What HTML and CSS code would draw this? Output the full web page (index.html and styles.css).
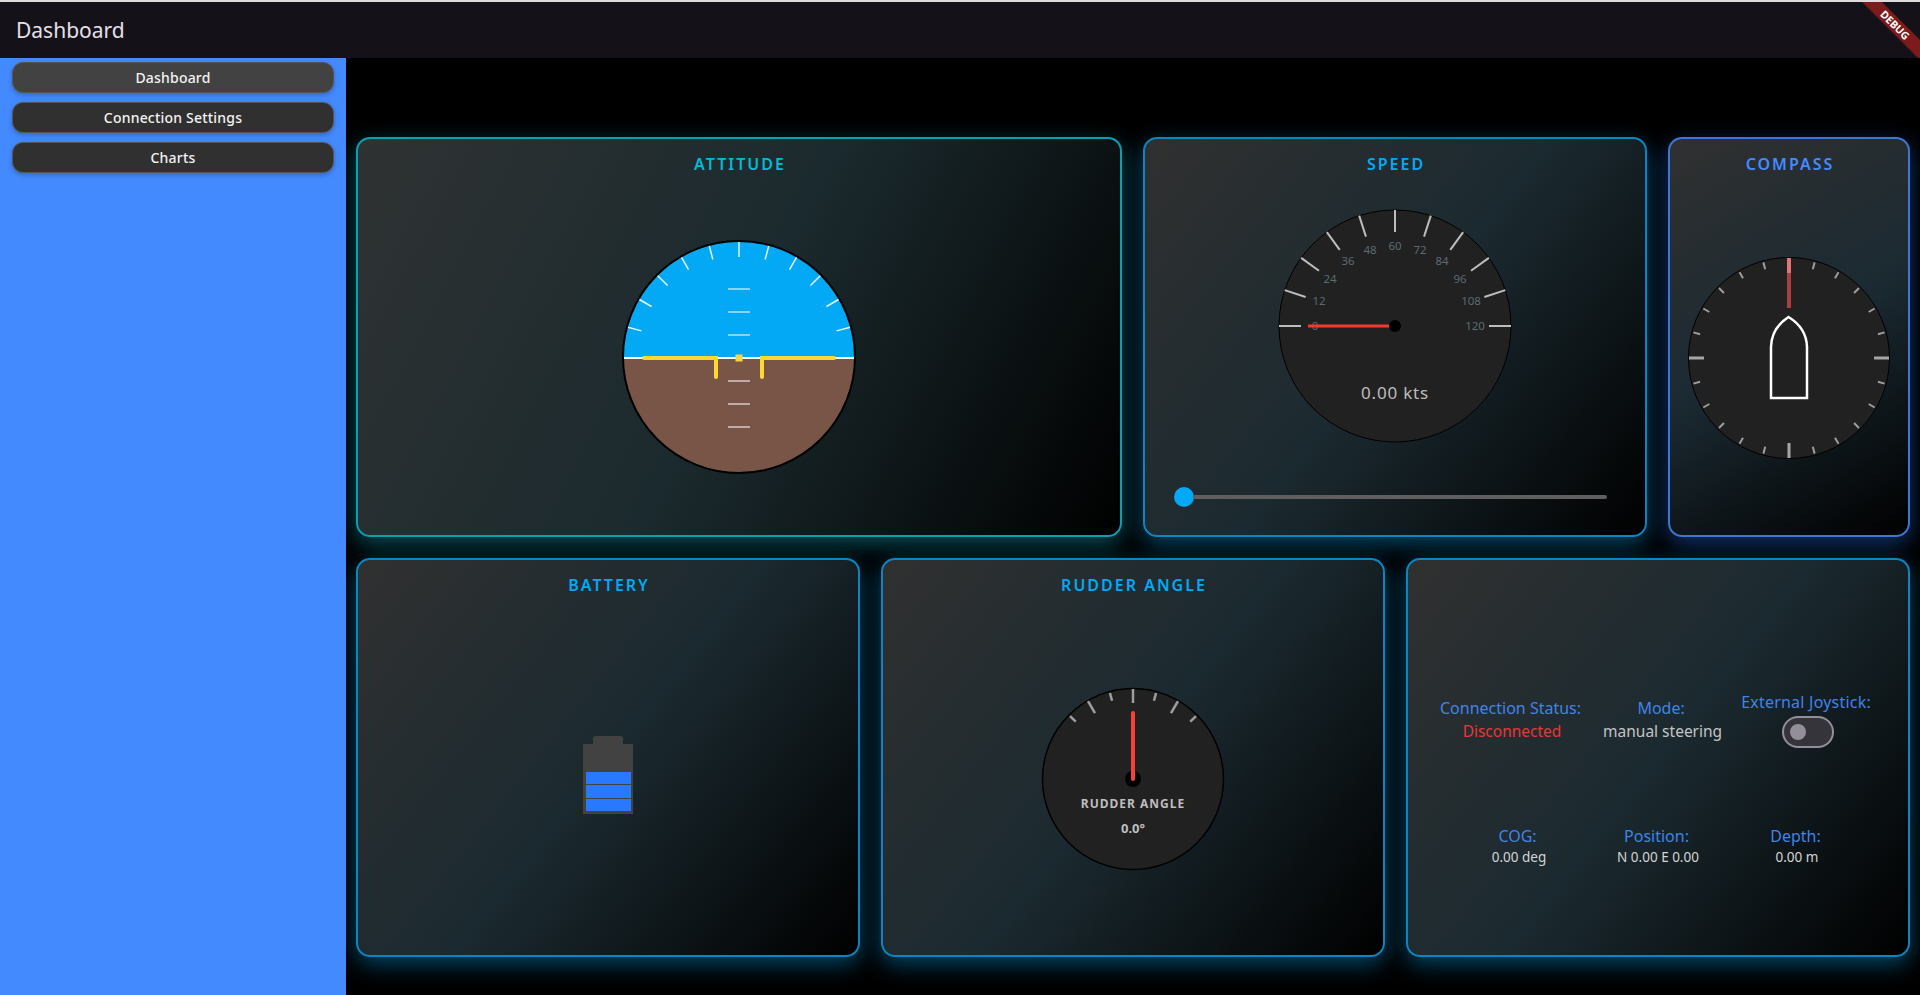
FILE: index.html
```html
<!DOCTYPE html>
<html lang="en">
<head>
<meta charset="utf-8">
<title>Dashboard</title>
<link rel="stylesheet" href="styles.css">
</head>
<body>
<div class="app">
  <header class="appbar">
    <h1 class="appbar-title">Dashboard</h1>
    <div class="debug"><div class="debug-band">DEBUG</div></div>
  </header>
  <div class="body-row">
    <nav class="sidebar">
      <button class="nav-btn active">Dashboard</button>
      <button class="nav-btn">Connection Settings</button>
      <button class="nav-btn">Charts</button>
    </nav>
    <main class="main">
      <div class="row row-top">
        <section class="card card-cyan card-wide">
          <h2 class="card-title title-cyan">ATTITUDE</h2>
          <svg class="gauge attitude" viewBox="-118 -118 236 236" width="236" height="236">
            <defs><clipPath id="ac"><circle r="116"/></clipPath></defs>
            <g clip-path="url(#ac)">
              <rect x="-118" y="-118" width="236" height="119" fill="#03a9f4"/>
              <rect x="-118" y="1" width="236" height="118" fill="#795548"/>
              <line x1="-118" x2="118" y1="1" y2="1" class="att-horizon"/>
            </g>
            <circle r="116" class="att-rim"/>
            <g class="att-ticks">
              <line y1="-115" y2="-100"/>
              <line y1="-115" y2="-101" transform="rotate(15)"/>
              <line y1="-115" y2="-101" transform="rotate(-15)"/>
              <line y1="-115" y2="-101" transform="rotate(30)"/>
              <line y1="-115" y2="-101" transform="rotate(-30)"/>
              <line y1="-115" y2="-101" transform="rotate(45)"/>
              <line y1="-115" y2="-101" transform="rotate(-45)"/>
              <line y1="-115" y2="-101" transform="rotate(60)"/>
              <line y1="-115" y2="-101" transform="rotate(-60)"/>
              <line y1="-115" y2="-101" transform="rotate(75)"/>
              <line y1="-115" y2="-101" transform="rotate(-75)"/>
            </g>
            <g class="att-pitch">
              <line x1="-11" x2="11" y1="-68" y2="-68"/>
              <line x1="-11" x2="11" y1="-45" y2="-45"/>
              <line x1="-11" x2="11" y1="-22" y2="-22"/>
              <line x1="-11" x2="11" y1="24" y2="24"/>
              <line x1="-11" x2="11" y1="47" y2="47"/>
              <line x1="-11" x2="11" y1="70" y2="70"/>
            </g>
            <g class="att-wings">
              <path d="M-95 1H-23V20"/>
              <path d="M95 1H23V20"/>
            </g>
            <rect x="-3.5" y="-2.5" width="7" height="7" fill="#fdd835"/>
          </svg>
        </section>
        <section class="card card-blue">
          <h2 class="card-title title-blue">SPEED</h2>
          <svg class="gauge speed" viewBox="-120 -120 240 240" width="240" height="240">
            <circle r="116" class="dial"/>
            <g class="speed-ticks">
              <line y1="-116" y2="-94" transform="rotate(-90)"/>
              <line y1="-116" y2="-94" transform="rotate(-72)"/>
              <line y1="-116" y2="-94" transform="rotate(-54)"/>
              <line y1="-116" y2="-94" transform="rotate(-36)"/>
              <line y1="-116" y2="-94" transform="rotate(-18)"/>
              <line y1="-116" y2="-94"/>
              <line y1="-116" y2="-94" transform="rotate(18)"/>
              <line y1="-116" y2="-94" transform="rotate(36)"/>
              <line y1="-116" y2="-94" transform="rotate(54)"/>
              <line y1="-116" y2="-94" transform="rotate(72)"/>
              <line y1="-116" y2="-94" transform="rotate(90)"/>
            </g>
            <g class="speed-labels">
              <text x="-80" y="4">0</text>
              <text x="-76" y="-21">12</text>
              <text x="-65" y="-43">24</text>
              <text x="-47" y="-61">36</text>
              <text x="-25" y="-72">48</text>
              <text x="0" y="-76">60</text>
              <text x="25" y="-72">72</text>
              <text x="47" y="-61">84</text>
              <text x="65" y="-43">96</text>
              <text x="76" y="-21">108</text>
              <text x="80" y="4">120</text>
            </g>
            <line x1="-87" x2="0" y1="0" y2="0" class="speed-needle"/>
            <circle r="6" fill="#000"/>
            <text y="73" class="speed-value">0.00 kts</text>
          </svg>
          <div class="slider"><span class="slider-thumb"></span><span class="slider-track"></span></div>
        </section>
        <section class="card card-indigo card-narrow">
          <h2 class="card-title title-indigo">COMPASS</h2>
          <svg class="gauge compass" viewBox="-102 -102 204 204" width="204" height="204">
            <circle r="100.5" class="dial"/>
            <g class="compass-major">
              <line y1="-100" y2="-85" transform="rotate(90)"/>
              <line y1="-100" y2="-85" transform="rotate(180)"/>
              <line y1="-100" y2="-85" transform="rotate(270)"/>
            </g>
            <g class="compass-minor">
              <line y1="-99" y2="-92" transform="rotate(15)"/>
              <line y1="-99" y2="-92" transform="rotate(30)"/>
              <line y1="-99" y2="-92" transform="rotate(45)"/>
              <line y1="-99" y2="-92" transform="rotate(60)"/>
              <line y1="-99" y2="-92" transform="rotate(75)"/>
              <line y1="-99" y2="-92" transform="rotate(105)"/>
              <line y1="-99" y2="-92" transform="rotate(120)"/>
              <line y1="-99" y2="-92" transform="rotate(135)"/>
              <line y1="-99" y2="-92" transform="rotate(150)"/>
              <line y1="-99" y2="-92" transform="rotate(165)"/>
              <line y1="-99" y2="-92" transform="rotate(195)"/>
              <line y1="-99" y2="-92" transform="rotate(210)"/>
              <line y1="-99" y2="-92" transform="rotate(225)"/>
              <line y1="-99" y2="-92" transform="rotate(240)"/>
              <line y1="-99" y2="-92" transform="rotate(255)"/>
              <line y1="-99" y2="-92" transform="rotate(285)"/>
              <line y1="-99" y2="-92" transform="rotate(300)"/>
              <line y1="-99" y2="-92" transform="rotate(315)"/>
              <line y1="-99" y2="-92" transform="rotate(330)"/>
              <line y1="-99" y2="-92" transform="rotate(345)"/>
            </g>
            <rect x="-2" y="-100" width="4" height="15" fill="#e57373"/>
            <rect x="-2" y="-85" width="4" height="35" fill="#ab3f3f"/>
            <path class="boat" d="M-0.5 -41Q-17.5 -30 -18 -11V40H18V-11Q17.5 -30 -0.5 -41Z"/>
          </svg>
        </section>
      </div>
      <div class="row row-bottom">
        <section class="card card-blue">
          <h2 class="card-title title-blue">BATTERY</h2>
          <div class="battery">
            <div class="battery-cap"></div>
            <div class="battery-body">
              <div class="battery-cell"></div>
              <div class="battery-cell"></div>
              <div class="battery-cell"></div>
            </div>
          </div>
        </section>
        <section class="card card-blue">
          <h2 class="card-title title-blue">RUDDER ANGLE</h2>
          <svg class="gauge rudder" viewBox="-92 -92 184 184" width="184" height="184">
            <circle r="90.5" class="dial dial-thick"/>
            <g class="rudder-ticks">
              <line y1="-90" y2="-76"/>
              <line y1="-90" y2="-76" transform="rotate(30)"/>
              <line y1="-90" y2="-76" transform="rotate(-30)"/>
              <line y1="-89" y2="-81" transform="rotate(15)"/>
              <line y1="-89" y2="-81" transform="rotate(-15)"/>
              <line y1="-89" y2="-81" transform="rotate(45)"/>
              <line y1="-89" y2="-81" transform="rotate(-45)"/>
            </g>
            <circle r="8" fill="#000"/>
            <line y1="0" y2="-66" class="rudder-needle"/>
            <text y="29" class="rudder-label">RUDDER ANGLE</text>
            <text y="54" class="rudder-value">0.0°</text>
          </svg>
        </section>
        <section class="card card-blue info-card">
          <div class="info-row-top">
            <div class="info-item">
              <div class="info-label">Connection Status:</div>
              <div class="info-value info-red">Disconnected</div>
            </div>
            <div class="info-item">
              <div class="info-label">Mode:</div>
              <div class="info-value">manual steering</div>
            </div>
            <div class="info-item">
              <div class="info-label info-label-wide">External Joystick:</div>
              <div class="switch"><span class="switch-thumb"></span></div>
            </div>
          </div>
          <div class="info-row-bottom">
            <div class="info-item">
              <div class="info-label">COG:</div>
              <div class="info-small">0.00 deg</div>
            </div>
            <div class="info-item">
              <div class="info-label">Position:</div>
              <div class="info-small">N 0.00 E 0.00</div>
            </div>
            <div class="info-item">
              <div class="info-label">Depth:</div>
              <div class="info-small">0.00 m</div>
            </div>
          </div>
        </section>
      </div>
    </main>
  </div>
</div>
</body>
</html>
```
FILE: styles.css
```css
* { box-sizing: border-box; }
html, body { margin: 0; padding: 0; height: 100%; background: #000; }
body { font-family: "Noto Sans", "Open Sans", sans-serif; overflow: hidden; }
.app { height: 995px; display: flex; flex-direction: column; }

.appbar {
  position: relative;
  height: 58px;
  flex: none;
  background: #141218;
  border-top: 2px solid #dcdcdc;
  display: flex;
  align-items: center;
  padding-left: 16px;
}
.appbar-title { margin: 0; font-size: 21px; font-weight: 400; color: #e6e0e9; line-height: 1; }
.debug { position: absolute; top: 0; right: 0; width: 60px; height: 56px; overflow: hidden; }
.debug-band {
  position: absolute;
  left: -15px;
  top: 16px;
  width: 100px;
  height: 14px;
  background: #7d1a1c;
  color: #fff;
  font-size: 10.5px;
  font-weight: 700;
  line-height: 14px;
  text-align: center;
  transform: rotate(45deg);
}

.body-row { flex: 1; display: flex; min-height: 0; }
.sidebar {
  width: 346px;
  flex: none;
  background: #448aff;
  padding: 4px 12px;
  display: flex;
  flex-direction: column;
  gap: 9px;
  position: relative;
  z-index: 2;
}
.nav-btn {
  height: 31px;
  width: 322px;
  border-radius: 11px;
  border: 1px solid #555;
  background: #303030;
  color: #f2f2f2;
  font: 500 14px "Noto Sans", sans-serif;
  letter-spacing: .2px;
  box-shadow: 0 2px 5px rgba(0, 0, 0, .25);
  padding: 0;
}
.nav-btn.active { background: #424242; }

.main {
  flex: 1;
  min-width: 0;
  padding: 79px 10px 38px;
  display: grid;
  grid-template-rows: 1fr 1fr;
  gap: 21px;
  overflow: hidden;
}
.row { display: grid; gap: 21px; min-height: 0; }
.row-top { grid-template-columns: 766px 504px 1fr; }
.row-bottom { grid-template-columns: repeat(3, 1fr); }

.card {
  border-radius: 14px;
  border: 2px solid;
  background: linear-gradient(128.4deg, #303030 0%, #1b2a30 50%, #000 100%);
  padding-top: 14px;
  display: flex;
  flex-direction: column;
  align-items: center;
}
.card-wide { background: linear-gradient(117.5deg, #2f3233 0%, #1b2a2e 50%, #000 100%); }
.card-narrow { background: linear-gradient(148.8deg, #303030 0%, #1b2a32 50%, #000 100%); }
.card-cyan { border-color: #0a9fb3; box-shadow: 0 7px 22px rgba(0, 188, 212, .42); }
.card-blue { border-color: #0b86c4; box-shadow: 0 7px 22px rgba(3, 169, 244, .42); }
.card-indigo { border-color: #3a78d6; box-shadow: 0 7px 22px rgba(41, 121, 255, .42); }

.card-title {
  margin: 0;
  height: 22px;
  line-height: 22px;
  font-size: 16px;
  font-weight: 600;
  letter-spacing: 2px;
  padding-left: 2px;
}
.title-cyan { color: #00bcd4; }
.title-blue { color: #03a9f4; }
.title-indigo { color: #448aff; }

.gauge { display: block; flex: none; }
.attitude { margin-top: 64px; }
.speed { margin-top: 31px; }
.compass { margin-top: 81px; }
.rudder { margin-top: 91px; }

.dial { fill: #212121; stroke: #000; stroke-width: 1; }
.dial-thick { stroke-width: 1.5; }

.att-rim { fill: none; stroke: #000; stroke-width: 2; }
.att-horizon { stroke: #fff; stroke-width: 2; }
.att-ticks line { stroke: #fff; stroke-width: 1.5; opacity: .9; }
.att-pitch line { stroke: #fff; stroke-width: 1.5; opacity: .7; }
.att-wings path { fill: none; stroke: #fdd835; stroke-width: 4; stroke-linecap: round; stroke-linejoin: miter; }

.speed-ticks line { stroke: #bdbdbd; stroke-width: 2; }
.speed-labels text { fill: #5a6b73; font-size: 11.5px; text-anchor: middle; }
.speed-needle { stroke: #f9372c; stroke-width: 3; }
.speed-value { fill: #bdbdbd; font-size: 17px; text-anchor: middle; letter-spacing: .8px; }

.slider {
  width: 433px;
  margin-top: 41px;
  margin-left: -10px;
  height: 20px;
  display: flex;
  align-items: center;
}
.slider-thumb { width: 20px; height: 20px; border-radius: 50%; background: #03a9f4; flex: none; }
.slider-track { flex: 1; height: 4px; border-radius: 2px; background: #5f5f5f; margin-left: -1px; }

.compass-major line { stroke: #a6a6a6; stroke-width: 3; }
.compass-minor line { stroke: #9e9e9e; stroke-width: 2; }
.boat { fill: none; stroke: #fff; stroke-width: 2.5; }

.rudder-ticks line { stroke: #9e9e9e; stroke-width: 2.5; }
.rudder-needle { stroke: #f44336; stroke-width: 4; stroke-linecap: round; }
.rudder-label { fill: #bdbdbd; font-size: 12px; font-weight: 700; letter-spacing: 1px; text-anchor: middle; }
.rudder-value { fill: #bdbdbd; font-size: 13px; font-weight: 700; text-anchor: middle; }

.battery { margin-top: 140px; display: flex; flex-direction: column; align-items: center; }
.battery-cap { width: 30px; height: 8px; background: #424242; border-radius: 3px 3px 0 0; }
.battery-body {
  width: 50px;
  height: 70px;
  background: #424242;
  padding: 2.5px;
  display: flex;
  flex-direction: column;
  justify-content: flex-end;
  gap: 1px;
}
.battery-cell { height: 12.5px; background: #2979ff; }

.info-card { padding-top: 130px; }
.info-row-top { display: flex; justify-content: center; align-items: center; gap: 19px; height: 60px; margin-left: -2px; }
.info-row-bottom { display: grid; grid-template-columns: repeat(3, 139px); justify-content: center; margin-top: 75px; }
.info-item { display: flex; flex-direction: column; align-items: center; text-align: center; }
.info-label { color: #3f83ea; font-size: 16px; line-height: 22px; padding-right: 3px; }
.info-label-wide { letter-spacing: .22px; }
.info-value { color: #c4c4c4; font-size: 15.5px; line-height: 22px; margin-top: 1px; }
.info-red { color: #e53935; }
.info-small { color: #d4d4d4; font-size: 13.5px; line-height: 20px; }

.switch {
  width: 52px;
  height: 32px;
  border-radius: 16px;
  background: #36343b;
  border: 2px solid #938f99;
  margin-top: 3px;
  display: flex;
  align-items: center;
  padding-left: 6px;
}
.switch-thumb { width: 16px; height: 16px; border-radius: 50%; background: #938f99; }
```
